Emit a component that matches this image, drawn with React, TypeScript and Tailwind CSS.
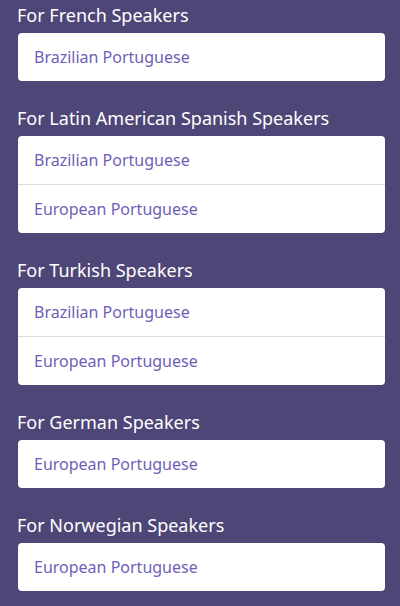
const sections: { title: string; items: string[] }[] = [
  { title: 'For French Speakers', items: ['Brazilian Portuguese'] },
  { title: 'For Latin American Spanish Speakers', items: ['Brazilian Portuguese', 'European Portuguese'] },
  { title: 'For Turkish Speakers', items: ['Brazilian Portuguese', 'European Portuguese'] },
  { title: 'For German Speakers', items: ['European Portuguese'] },
  { title: 'For Norwegian Speakers', items: ['European Portuguese'] },
];

export default function App() {
  return (
    <div
      className="min-h-[606px] w-[400px] bg-[#4f4678] pl-[18px] pr-[15px] pt-[3px] pb-4 flex flex-col gap-[25px]"
      style={{ fontFamily: '"Noto Sans", "Open Sans", sans-serif' }}
    >
      {sections.map((section) => (
        <section key={section.title}>
          <h2 className="text-[18px] leading-6 text-white mb-[6px] -ml-px">{section.title}</h2>
          <ul className="bg-white rounded-[4px] divide-y divide-[#dcdcdc]">
            {section.items.map((item) => (
              <li key={item} className="box-content h-12 flex items-center px-4 text-[16px] text-[#6e5fb6]">
                {item}
              </li>
            ))}
          </ul>
        </section>
      ))}
    </div>
  );
}
